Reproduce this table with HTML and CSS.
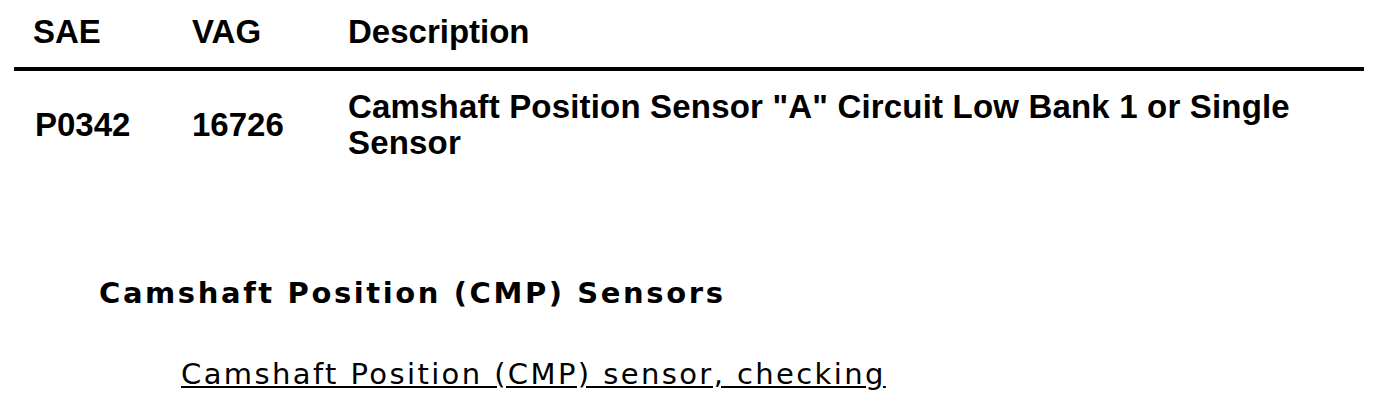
FILE: index.html
```html
<!DOCTYPE html>
<html>
<head>
<meta charset="utf-8">
<link rel="stylesheet" href="styles.css">
</head>
<body>
<table class="codes">
  <colgroup>
    <col class="col-sae">
    <col class="col-vag">
    <col class="col-desc">
  </colgroup>
  <thead>
    <tr>
      <th class="c-sae">SAE</th>
      <th class="c-vag">VAG</th>
      <th class="c-desc">Description</th>
    </tr>
  </thead>
  <tbody>
    <tr>
      <td class="c-sae">P0342</td>
      <td class="c-vag">16726</td>
      <td class="c-desc">Camshaft Position Sensor "A" Circuit Low Bank 1 or Single Sensor</td>
    </tr>
  </tbody>
</table>
<section class="related">
  <h2 class="related-title">Camshaft Position (CMP) Sensors</h2>
  <a class="related-link" href="#">Camshaft Position (CMP) sensor, checking</a>
</section>
</body>
</html>
```
FILE: styles.css
```css
html, body {
  margin: 0;
  padding: 0;
  background: #fff;
  color: #000;
}
body {
  padding: 0 28px 0 14px;
}
.codes {
  width: 1350px;
  table-layout: fixed;
  border-collapse: collapse;
  font-family: "Liberation Sans", Arial, sans-serif;
  font-weight: bold;
  font-size: 33px;
}
.col-sae { width: 178px; }
.col-vag { width: 156px; }
.col-desc { width: 1016px; }
.codes th,
.codes td {
  padding: 0;
  line-height: 36px;
  text-align: left;
}
.codes th {
  font-weight: bold;
  padding-top: 14px;
  padding-bottom: 17px;
  border-bottom: 4px solid #000;
}
.codes td {
  vertical-align: middle;
  padding-top: 18px;
}
.codes td.c-desc { letter-spacing: 0.18px; }
.codes th.c-sae { padding-left: 19px; }
.codes td.c-sae { padding-left: 21px; }
.related {
  padding: 114px 0 0 85px;
}
.related-title {
  margin: 0;
  font-family: "DejaVu Sans", sans-serif;
  font-weight: bold;
  font-size: 29px;
  letter-spacing: 2.6px;
  line-height: 36px;
}
.related-link {
  display: inline-block;
  margin: 45px 0 0 82px;
  font-family: "DejaVu Sans", sans-serif;
  font-size: 29px;
  letter-spacing: 2.4px;
  line-height: 36px;
  color: #000;
  text-decoration: underline;
}
```
